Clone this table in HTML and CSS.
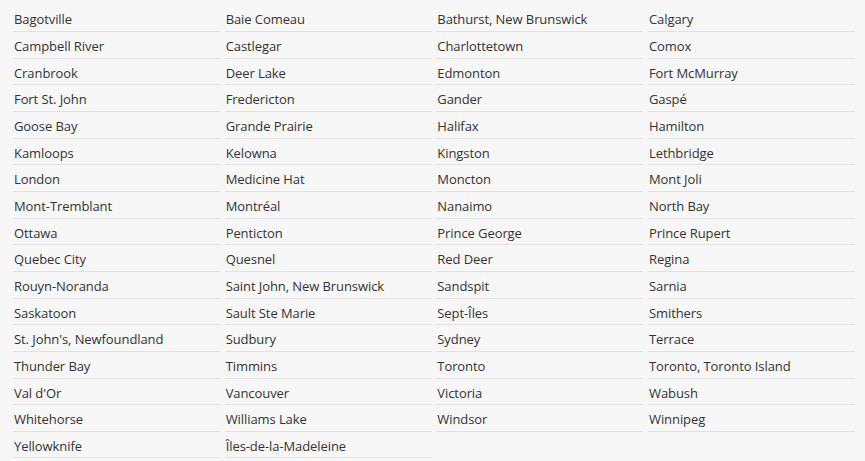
FILE: index.html
```html
<!DOCTYPE html>
<html lang="en">
<head>
<meta charset="utf-8">
<title>Airports</title>
<link rel="stylesheet" href="styles.css">
</head>
<body>
<ul class="city-list">
<li>Bagotville</li><li>Baie Comeau</li><li>Bathurst, New Brunswick</li><li>Calgary</li>
<li>Campbell River</li><li>Castlegar</li><li>Charlottetown</li><li>Comox</li>
<li>Cranbrook</li><li>Deer Lake</li><li>Edmonton</li><li>Fort McMurray</li>
<li>Fort St. John</li><li>Fredericton</li><li>Gander</li><li>Gaspé</li>
<li>Goose Bay</li><li>Grande Prairie</li><li>Halifax</li><li>Hamilton</li>
<li>Kamloops</li><li>Kelowna</li><li>Kingston</li><li>Lethbridge</li>
<li>London</li><li>Medicine Hat</li><li>Moncton</li><li>Mont Joli</li>
<li>Mont-Tremblant</li><li>Montréal</li><li>Nanaimo</li><li>North Bay</li>
<li>Ottawa</li><li>Penticton</li><li>Prince George</li><li>Prince Rupert</li>
<li>Quebec City</li><li>Quesnel</li><li>Red Deer</li><li>Regina</li>
<li>Rouyn-Noranda</li><li>Saint John, New Brunswick</li><li>Sandspit</li><li>Sarnia</li>
<li>Saskatoon</li><li>Sault Ste Marie</li><li>Sept-Îles</li><li>Smithers</li>
<li>St. John's, Newfoundland</li><li>Sudbury</li><li>Sydney</li><li>Terrace</li>
<li>Thunder Bay</li><li>Timmins</li><li>Toronto</li><li>Toronto, Toronto Island</li>
<li>Val d'Or</li><li>Vancouver</li><li>Victoria</li><li>Wabush</li>
<li>Whitehorse</li><li>Williams Lake</li><li>Windsor</li><li>Winnipeg</li>
<li>Yellowknife</li><li>Îles-de-la-Madeleine</li>
</ul>
</body>
</html>
```

FILE: styles.css
```css
html, body {
  margin: 0;
  padding: 0;
  background: #f7f7f7;
}

body {
  font-family: "Open Sans", "Liberation Sans", sans-serif;
  font-size: 13px;
  letter-spacing: -0.08px;
  color: #333;
}

.city-list {
  list-style: none;
  margin: 0;
  padding: 5.33px 0 0 13px;
  width: 842px;
  display: grid;
  grid-template-columns: repeat(4, 207px);
  column-gap: 4.67px;
}

.city-list li {
  height: 26.67px;
  box-sizing: border-box;
  padding-top: 3px;
  line-height: 22.67px;
  padding-left: 1px;
  border-bottom: 1px solid #e2e2e2;
  white-space: nowrap;
}
```
